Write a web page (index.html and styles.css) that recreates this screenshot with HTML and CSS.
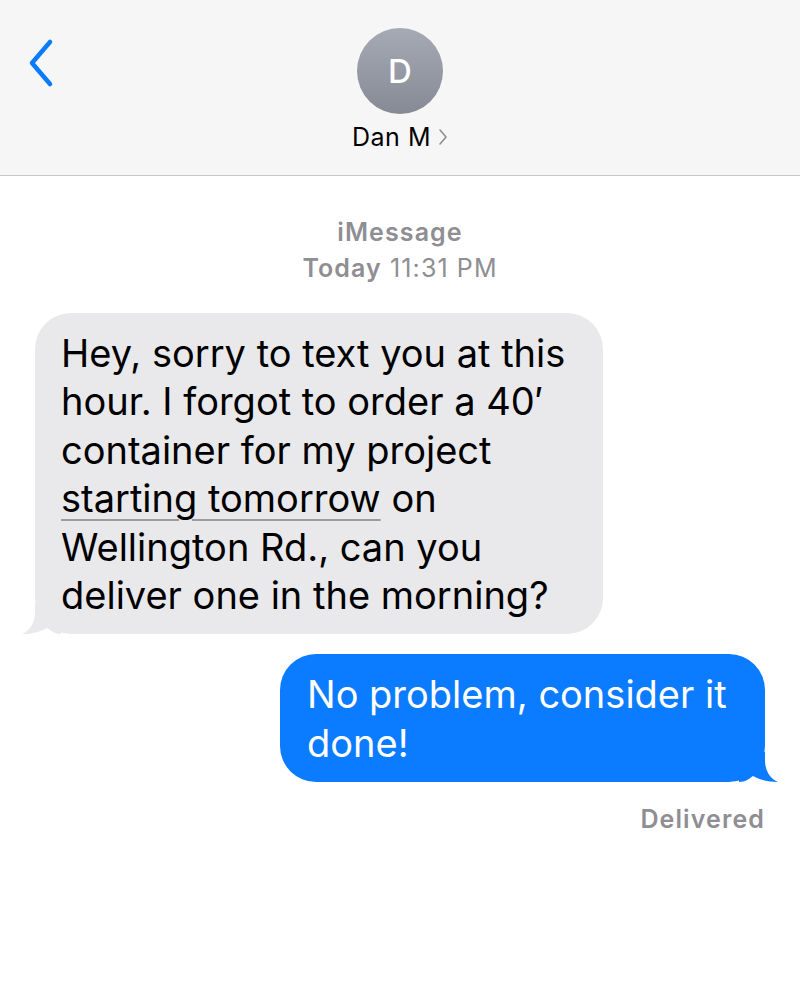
FILE: index.html
```html
<!DOCTYPE html>
<html lang="en">
<head>
    <meta charset="UTF-8">
    <meta name="viewport" content="width=device-width, initial-scale=1.0">
    <title>Dan M</title>
    <link rel="stylesheet" href="styles.css">
</head>
<body>
    <header class="top-bar">
        <div class="back">
            <svg width="28" height="50" viewBox="0 0 28 50">
                <path d="M24 4 L6 25 L24 46" fill="none" stroke="#0a7aff" stroke-width="4.5" stroke-linecap="round" stroke-linejoin="round"/>
            </svg>
        </div>
        <div class="contact">
            <div class="avatar">D</div>
            <div class="name">
                Dan M
                <svg width="10" height="18" viewBox="0 0 10 18">
                    <path d="M2 2 L8 9 L2 16" fill="none" stroke="#8e8e93" stroke-width="1.6" stroke-linecap="round" stroke-linejoin="round"/>
                </svg>
            </div>
        </div>
        <div></div>
    </header>

    <main class="thread">
        <div class="stamp">
            <div class="service">iMessage</div>
            <div class="time"><b>Today</b> 11:31 PM</div>
        </div>

        <div class="bubble received">
            Hey, sorry to text you at this hour. I forgot to order a 40&prime; container for my project <span class="link">starting tomorrow</span> on Wellington Rd., can you deliver one in the morning?
            <svg class="tail" width="40" height="30" viewBox="0 0 40 30">
                <path d="M14 0 L14 8 C14 20 8 27 1 30 C10 30 19 28 26 24 C30 27 34 30 40 30 L40 0 Z" fill="#e9e9eb"/>
            </svg>
        </div>

        <div class="bubble sent">
            No problem, consider it done!
            <svg class="tail" width="40" height="30" viewBox="0 0 40 30">
                <path d="M26 0 L26 8 C26 20 32 27 39 30 C30 30 21 28 14 24 C10 27 6 30 0 30 L0 0 Z" fill="#0b7bff"/>
            </svg>
        </div>

        <div class="status">Delivered</div>
    </main>
</body>
</html>
```

FILE: styles.css
```css
body {
    margin: 0;
    background: #fff;
    font-family: Inter, "Noto Sans", sans-serif;
    color: #000;
}

.top-bar {
    display: grid;
    grid-template-columns: 1fr auto 1fr;
    align-items: start;
    height: 175px;
    background: #f6f6f6;
    border-bottom: 1.5px solid #c8c8cc;
}

.back {
    padding: 38px 0 0 26px;
}

.contact {
    display: flex;
    flex-direction: column;
    align-items: center;
    padding-top: 28px;
}

.avatar {
    width: 86px;
    height: 86px;
    border-radius: 50%;
    background: linear-gradient(#a6aab4, #868a95);
    color: #fff;
    font-size: 33px;
    font-weight: 500;
    display: flex;
    align-items: center;
    justify-content: center;
}

.name {
    margin-top: 8px;
    font-size: 25px;
    display: flex;
    align-items: center;
    gap: 7px;
    letter-spacing: 0.5px;
}

.thread {
    display: flex;
    flex-direction: column;
    padding: 0 35px;
}

.stamp {
    text-align: center;
    color: #8e8e93;
    font-size: 25px;
    letter-spacing: 1.1px;
    margin-top: 38px;
    line-height: 36px;
}

.service {
    font-weight: 600;
}

.time b {
    font-weight: 600;
}

.bubble {
    position: relative;
    box-sizing: border-box;
    font-size: 38px;
    line-height: 48.4px;
    border-radius: 36px;
}

.received {
    align-self: flex-start;
    width: 568px;
    margin-top: 27px;
    padding: 16px 26px 15px 26px;
    background: #e9e9eb;
    color: #000;
}

.sent {
    align-self: flex-end;
    width: 485px;
    margin-top: 20px;
    padding: 16px 27px 15px 27px;
    background: #0b7bff;
    color: #fff;
}

/* tails sit over the bottom corner */
.tail {
    position: absolute;
    bottom: 0;
    display: block;
}

.received .tail {
    left: -14px;
}

.sent .tail {
    right: -14px;
}

.link {
    text-decoration: underline;
    text-decoration-color: #9c9ca0;
    text-decoration-thickness: 2px;
    text-underline-offset: 7px;
}

.status {
    align-self: flex-end;
    margin-top: 22px;
    font-size: 25px;
    letter-spacing: 1.1px;
    font-weight: 600;
    color: #8e8e93;
}
```
